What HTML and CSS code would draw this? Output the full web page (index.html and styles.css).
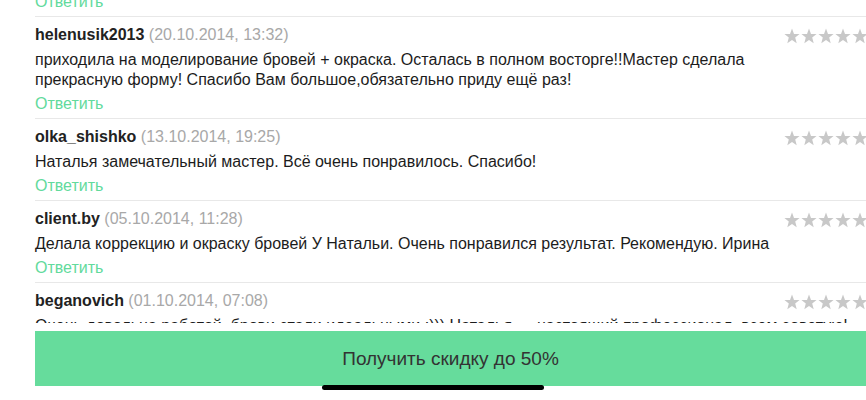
FILE: index.html
```html
<!DOCTYPE html>
<html lang="ru">
<head>
<meta charset="utf-8">
<title>Отзывы</title>
<link rel="stylesheet" href="styles.css">
</head>
<body>
<div class="page">
  <div class="list">
    <div class="stub"><a class="reply">Ответить</a></div>

    <div class="item">
      <div class="head">
        <div class="who"><span class="name">helenusik2013</span> <span class="date">(20.10.2014, 13:32)</span></div>
        <div class="stars">
          <svg viewBox="0 0 16 16"><polygon points="8,0.5 10,5.9 15.6,6.1 11.2,9.6 12.7,15.2 8,11.9 3.3,15.2 4.8,9.6 0.4,6.1 6,5.9"/></svg>
          <svg viewBox="0 0 16 16"><polygon points="8,0.5 10,5.9 15.6,6.1 11.2,9.6 12.7,15.2 8,11.9 3.3,15.2 4.8,9.6 0.4,6.1 6,5.9"/></svg>
          <svg viewBox="0 0 16 16"><polygon points="8,0.5 10,5.9 15.6,6.1 11.2,9.6 12.7,15.2 8,11.9 3.3,15.2 4.8,9.6 0.4,6.1 6,5.9"/></svg>
          <svg viewBox="0 0 16 16"><polygon points="8,0.5 10,5.9 15.6,6.1 11.2,9.6 12.7,15.2 8,11.9 3.3,15.2 4.8,9.6 0.4,6.1 6,5.9"/></svg>
          <svg viewBox="0 0 16 16"><polygon points="8,0.5 10,5.9 15.6,6.1 11.2,9.6 12.7,15.2 8,11.9 3.3,15.2 4.8,9.6 0.4,6.1 6,5.9"/></svg>
        </div>
      </div>
      <p class="text">приходила на моделирование бровей + окраска. Осталась в полном восторге!!Мастер сделала<br>прекрасную форму! Спасибо Вам большое,обязательно приду ещё раз!</p>
      <a class="reply">Ответить</a>
    </div>

    <div class="item">
      <div class="head">
        <div class="who"><span class="name">olka_shishko</span> <span class="date">(13.10.2014, 19:25)</span></div>
        <div class="stars">
          <svg viewBox="0 0 16 16"><polygon points="8,0.5 10,5.9 15.6,6.1 11.2,9.6 12.7,15.2 8,11.9 3.3,15.2 4.8,9.6 0.4,6.1 6,5.9"/></svg>
          <svg viewBox="0 0 16 16"><polygon points="8,0.5 10,5.9 15.6,6.1 11.2,9.6 12.7,15.2 8,11.9 3.3,15.2 4.8,9.6 0.4,6.1 6,5.9"/></svg>
          <svg viewBox="0 0 16 16"><polygon points="8,0.5 10,5.9 15.6,6.1 11.2,9.6 12.7,15.2 8,11.9 3.3,15.2 4.8,9.6 0.4,6.1 6,5.9"/></svg>
          <svg viewBox="0 0 16 16"><polygon points="8,0.5 10,5.9 15.6,6.1 11.2,9.6 12.7,15.2 8,11.9 3.3,15.2 4.8,9.6 0.4,6.1 6,5.9"/></svg>
          <svg viewBox="0 0 16 16"><polygon points="8,0.5 10,5.9 15.6,6.1 11.2,9.6 12.7,15.2 8,11.9 3.3,15.2 4.8,9.6 0.4,6.1 6,5.9"/></svg>
        </div>
      </div>
      <p class="text">Наталья замечательный мастер. Всё очень понравилось. Спасибо!</p>
      <a class="reply">Ответить</a>
    </div>

    <div class="item">
      <div class="head">
        <div class="who"><span class="name">client.by</span> <span class="date">(05.10.2014, 11:28)</span></div>
        <div class="stars">
          <svg viewBox="0 0 16 16"><polygon points="8,0.5 10,5.9 15.6,6.1 11.2,9.6 12.7,15.2 8,11.9 3.3,15.2 4.8,9.6 0.4,6.1 6,5.9"/></svg>
          <svg viewBox="0 0 16 16"><polygon points="8,0.5 10,5.9 15.6,6.1 11.2,9.6 12.7,15.2 8,11.9 3.3,15.2 4.8,9.6 0.4,6.1 6,5.9"/></svg>
          <svg viewBox="0 0 16 16"><polygon points="8,0.5 10,5.9 15.6,6.1 11.2,9.6 12.7,15.2 8,11.9 3.3,15.2 4.8,9.6 0.4,6.1 6,5.9"/></svg>
          <svg viewBox="0 0 16 16"><polygon points="8,0.5 10,5.9 15.6,6.1 11.2,9.6 12.7,15.2 8,11.9 3.3,15.2 4.8,9.6 0.4,6.1 6,5.9"/></svg>
          <svg viewBox="0 0 16 16"><polygon points="8,0.5 10,5.9 15.6,6.1 11.2,9.6 12.7,15.2 8,11.9 3.3,15.2 4.8,9.6 0.4,6.1 6,5.9"/></svg>
        </div>
      </div>
      <p class="text">Делала коррекцию и окраску бровей У Натальи. Очень понравился результат. Рекомендую. Ирина</p>
      <a class="reply">Ответить</a>
    </div>

    <div class="item">
      <div class="head">
        <div class="who"><span class="name">beganovich</span> <span class="date">(01.10.2014, 07:08)</span></div>
        <div class="stars">
          <svg viewBox="0 0 16 16"><polygon points="8,0.5 10,5.9 15.6,6.1 11.2,9.6 12.7,15.2 8,11.9 3.3,15.2 4.8,9.6 0.4,6.1 6,5.9"/></svg>
          <svg viewBox="0 0 16 16"><polygon points="8,0.5 10,5.9 15.6,6.1 11.2,9.6 12.7,15.2 8,11.9 3.3,15.2 4.8,9.6 0.4,6.1 6,5.9"/></svg>
          <svg viewBox="0 0 16 16"><polygon points="8,0.5 10,5.9 15.6,6.1 11.2,9.6 12.7,15.2 8,11.9 3.3,15.2 4.8,9.6 0.4,6.1 6,5.9"/></svg>
          <svg viewBox="0 0 16 16"><polygon points="8,0.5 10,5.9 15.6,6.1 11.2,9.6 12.7,15.2 8,11.9 3.3,15.2 4.8,9.6 0.4,6.1 6,5.9"/></svg>
          <svg viewBox="0 0 16 16"><polygon points="8,0.5 10,5.9 15.6,6.1 11.2,9.6 12.7,15.2 8,11.9 3.3,15.2 4.8,9.6 0.4,6.1 6,5.9"/></svg>
        </div>
      </div>
      <p class="text">Очень довольна работой, брови стали идеальными :))) Наталья — настоящий профессионал, всем советую!</p>
      <a class="reply">Ответить</a>
    </div>
  </div>

  <div class="footer">
    <a class="cta">Получить скидку до 50%</a>
  </div>
  <div class="home-indicator"></div>
</div>
</body>
</html>
```

FILE: styles.css
```css
html, body {
  margin: 0;
  padding: 0;
  background: #ffffff;
}

body {
  font-family: "Liberation Sans", Arial, sans-serif;
  font-size: 16px;
  color: #1c1c1c;
  overflow: hidden;
}

.page {
  position: relative;
  height: 400px;
  width: 866px;
  display: flex;
  flex-direction: column;
  overflow: hidden;
}

.list {
  height: 323px;
  overflow: hidden;
  flex: none;
}

.stub {
  margin-top: -12px;
  margin-left: 35px;
  padding-bottom: 3px;
}

.item {
  margin-left: 35px;
  border-top: 1px solid #e8e8e8;
  padding: 7px 0 3px 0;
}

.item:first-of-type .reply {
  margin-top: 2px;
}

.head {
  display: flex;
  align-items: center;
  justify-content: space-between;
  height: 22px;
}

.who {
  line-height: 22px;
  white-space: nowrap;
}

.name {
  font-weight: bold;
  color: #222222;
}

.date {
  color: #a8a8a8;
}

.stars {
  display: flex;
  gap: 1px;
  margin-right: -2px;
  padding-top: 1px;
}

.stars svg {
  width: 16px;
  height: 16px;
  fill: #c8c8c8;
  display: block;
}

.text {
  margin: 4px 0 0 0;
  line-height: 20px;
  color: #1c1c1c;
}

.reply {
  display: block;
  margin-top: 3px;
  line-height: 22px;
  color: #62da9c;
}

.footer {
  flex: none;
  padding: 8px 0 0 35px;
  background: #ffffff;
}

.cta {
  display: flex;
  align-items: center;
  justify-content: center;
  height: 55px;
  background: #66dc9c;
  color: #333333;
  font-size: 19px;
}

.home-indicator {
  position: absolute;
  left: 322px;
  top: 385px;
  width: 222px;
  height: 5px;
  border-radius: 3px;
  background: #000000;
}
```
